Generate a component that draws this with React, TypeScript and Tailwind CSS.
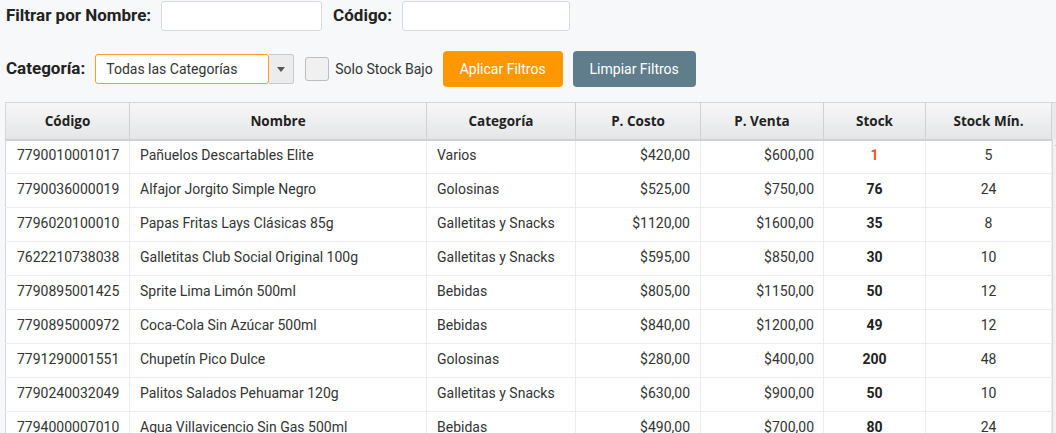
import React from 'react';

interface Product {
  code: string;
  name: string;
  category: string;
  cost: string;
  price: string;
  stock: number;
  min: number;
}

const products: Product[] = [
  { code: '7790010001017', name: 'Pañuelos Descartables Elite', category: 'Varios', cost: '$420,00', price: '$600,00', stock: 1, min: 5 },
  { code: '7790036000019', name: 'Alfajor Jorgito Simple Negro', category: 'Golosinas', cost: '$525,00', price: '$750,00', stock: 76, min: 24 },
  { code: '7796020100010', name: 'Papas Fritas Lays Clásicas 85g', category: 'Galletitas y Snacks', cost: '$1120,00', price: '$1600,00', stock: 35, min: 8 },
  { code: '7622210738038', name: 'Galletitas Club Social Original 100g', category: 'Galletitas y Snacks', cost: '$595,00', price: '$850,00', stock: 30, min: 10 },
  { code: '7790895001425', name: 'Sprite Lima Limón 500ml', category: 'Bebidas', cost: '$805,00', price: '$1150,00', stock: 50, min: 12 },
  { code: '7790895000972', name: 'Coca-Cola Sin Azúcar 500ml', category: 'Bebidas', cost: '$840,00', price: '$1200,00', stock: 49, min: 12 },
  { code: '7791290001551', name: 'Chupetín Pico Dulce', category: 'Golosinas', cost: '$280,00', price: '$400,00', stock: 200, min: 48 },
  { code: '7790240032049', name: 'Palitos Salados Pehuamar 120g', category: 'Galletitas y Snacks', cost: '$630,00', price: '$900,00', stock: 50, min: 10 },
  { code: '7794000007010', name: 'Agua Villavicencio Sin Gas 500ml', category: 'Bebidas', cost: '$490,00', price: '$700,00', stock: 80, min: 24 },
];

const columns = [
  { label: 'Código', width: 'w-[124px]' },
  { label: 'Nombre', width: 'w-[297px]' },
  { label: 'Categoría', width: 'w-[149px]' },
  { label: 'P. Costo', width: 'w-[125px]' },
  { label: 'P. Venta', width: 'w-[123px]' },
  { label: 'Stock', width: 'w-[102px]' },
  { label: 'Stock Mín.', width: 'w-[126px]' },
];

export default function App() {
  return (
    <div className="w-[1056px] h-[433px] overflow-hidden bg-[#f7f8fa] text-[#333] font-['Roboto',sans-serif]">
      {/* Filters row 1 */}
      <div className="flex items-center h-[31px] pl-[6px] pt-[1px]">
        <span className="text-[17px] font-bold text-[#222]">Filtrar por Nombre:</span>
        <input className="ml-[10px] w-[161px] h-[30px] bg-white border border-[#d6d9dd] rounded-[3px] outline-none" />
        <span className="ml-[11px] text-[17px] font-bold text-[#222]">Código:</span>
        <input className="ml-[10px] w-[168px] h-[30px] bg-white border border-[#d6d9dd] rounded-[3px] outline-none" />
      </div>

      {/* Filters row 2 */}
      <div className="flex items-center mt-[20px] h-[36px] pl-[6px]">
        <span className="text-[17px] font-bold text-[#222]">Categoría:</span>
        <div className="ml-[10px] flex h-[30px]">
          <div className="w-[174px] h-[30px] bg-white border border-[#ff9f1c] rounded-[3px] flex items-center pl-[10px] text-[14px] text-[#333]">
            Todas las Categorías
          </div>
          <div className="w-[25px] h-[30px] bg-[#ececec] border border-[#c9c9c9] border-l-0 rounded-r-[3px] flex items-center justify-center">
            <svg width="8" height="5" viewBox="0 0 8 5"><path d="M0 0h8L4 5z" fill="#555" /></svg>
          </div>
        </div>
        <div className="ml-[11px] w-[24px] h-[24px] bg-[#f0f0f0] border border-[#bdbdbd] rounded-[3px]" />
        <span className="ml-[6px] text-[14px] text-[#333]">Solo Stock Bajo</span>
        <button className="ml-[10px] w-[120px] h-[36px] bg-[#ff9800] text-white text-[14px] rounded-[4px]">Aplicar Filtros</button>
        <button className="ml-[10px] w-[123px] h-[36px] bg-[#607d8b] text-white text-[14px] rounded-[4px]">Limpiar Filtros</button>
      </div>

      {/* Table */}
      <div className="mt-[15px] ml-[5px] flex">
        <table className="table-fixed border-collapse w-[1047px] shrink-0 border-l border-t border-[#d5d7da]">
          <thead>
            <tr className="h-[37px] bg-gradient-to-b from-[#f7f7f8] to-[#e4e5e7]">
              {columns.map((c) => (
                <th
                  key={c.label}
                  className={`${c.width} border-r border-b-2 border-[#cfd1d4] text-[13.5px] font-bold text-[#222] font-['Open_Sans',sans-serif] text-center`}
                >
                  {c.label}
                </th>
              ))}
            </tr>
          </thead>
          <tbody className="bg-white text-[14px] text-[#333]">
            {products.map((p) => (
              <tr key={p.code} className="h-[34px] [&>td]:pb-[3px] [&>td]:border-r [&>td]:border-b [&>td]:border-[#ececec]">
                <td className="pl-[11px]">{p.code}</td>
                <td className="pl-[10px]">{p.name}</td>
                <td className="pl-[10px]">{p.category}</td>
                <td className="pr-[10px] text-right">{p.cost}</td>
                <td className="pr-[9px] text-right">{p.price}</td>
                <td
                  className={`text-center font-bold ${
                    p.stock <= p.min ? 'text-[#f4511e]' : 'text-[#222]'
                  }`}
                >
                  {p.stock}
                </td>
                <td className="text-center">{p.min}</td>
              </tr>
            ))}
          </tbody>
        </table>
        {/* vertical scrollbar */}
        <div className="w-[17px] shrink-0 flex flex-col">
          <div className="h-[37px] bg-[#e9eaec] border-t border-[#d5d7da]" />
          <div className="flex-1 bg-[#f1f1f1] border-l border-[#dcdcdc] pt-[3px] pl-[2px]">
            <svg width="7" height="4" viewBox="0 0 7 4"><path d="M0 4L3.5 0L7 4z" fill="#a3a3a3" /></svg>
          </div>
        </div>
      </div>
    </div>
  );
}
